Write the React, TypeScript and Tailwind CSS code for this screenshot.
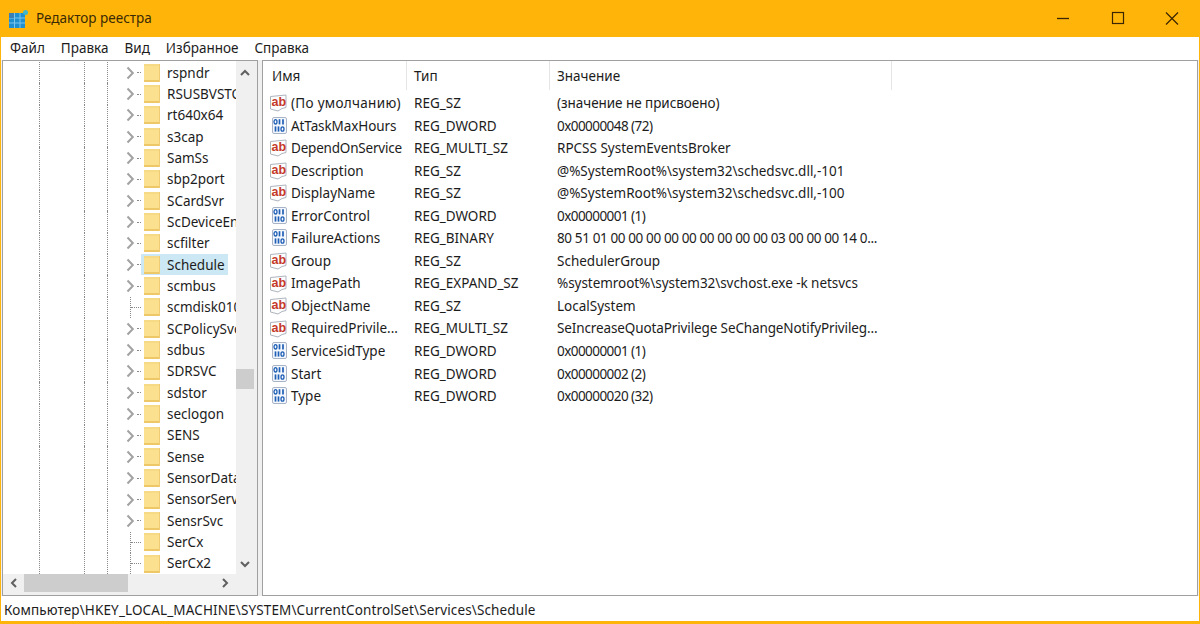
import React from "react";

const tree: [string, boolean][] = [
  ["rspndr", true], ["RSUSBVSTOR", true], ["rt640x64", true], ["s3cap", true], ["SamSs", true],
  ["sbp2port", true], ["SCardSvr", true], ["ScDeviceEnum", true], ["scfilter", true], ["Schedule", true],
  ["scmbus", true], ["scmdisk0101", false], ["SCPolicySvc", true], ["sdbus", true], ["SDRSVC", true],
  ["sdstor", true], ["seclogon", true], ["SENS", true], ["Sense", true], ["SensorDataService", true],
  ["SensorService", true], ["SensrSvc", true], ["SerCx", false], ["SerCx2", false],
];

type Row = { name: string; ab: boolean; type: string; value: string; nameCls?: string; valueCls?: string };
const HEX = "tracking-[-0.55px]";
const rows: Row[] = [
  { name: "(По умолчанию)", ab: true, type: "REG_SZ", value: "(значение не присвоено)", nameCls: "tracking-[0.3px]", valueCls: "tracking-[-0.05px]" },
  { name: "AtTaskMaxHours", ab: false, type: "REG_DWORD", value: "0x00000048 (72)", nameCls: "tracking-[-0.1px]", valueCls: HEX },
  { name: "DependOnService", ab: true, type: "REG_MULTI_SZ", value: "RPCSS SystemEventsBroker", nameCls: "tracking-[-0.2px]" },
  { name: "Description", ab: true, type: "REG_SZ", value: "@%SystemRoot%\\system32\\schedsvc.dll,-101" },
  { name: "DisplayName", ab: true, type: "REG_SZ", value: "@%SystemRoot%\\system32\\schedsvc.dll,-100" },
  { name: "ErrorControl", ab: false, type: "REG_DWORD", value: "0x00000001 (1)", valueCls: HEX },
  { name: "FailureActions", ab: false, type: "REG_BINARY", value: "80 51 01 00 00 00 00 00 00 00 00 00 03 00 00 00 14 0...", valueCls: "tracking-[-0.38px]" },
  { name: "Group", ab: true, type: "REG_SZ", value: "SchedulerGroup" },
  { name: "ImagePath", ab: true, type: "REG_EXPAND_SZ", value: "%systemroot%\\system32\\svchost.exe -k netsvcs", valueCls: "tracking-[-0.05px]" },
  { name: "ObjectName", ab: true, type: "REG_SZ", value: "LocalSystem" },
  { name: "RequiredPrivile...", ab: true, type: "REG_MULTI_SZ", value: "SeIncreaseQuotaPrivilege SeChangeNotifyPrivileg...", valueCls: "tracking-[-0.12px]" },
  { name: "ServiceSidType", ab: false, type: "REG_DWORD", value: "0x00000001 (1)", valueCls: HEX },
  { name: "Start", ab: false, type: "REG_DWORD", value: "0x00000002 (2)", valueCls: HEX },
  { name: "Type", ab: false, type: "REG_DWORD", value: "0x00000020 (32)", valueCls: HEX },
];

function AbIcon() {
  return (
    <svg width="19" height="18" viewBox="0 0 19 18" className="shrink-0">
      <path d="M1.5 2.5 L17 1 V13.5 L13 14.5 L9 17 L1.5 15 Z" fill="#fdfdfd" stroke="#aeb4be" strokeWidth="1" />
      <text x="2.5" y="12" fontFamily="'Liberation Sans', sans-serif" fontSize="12.5" fontWeight="700" fill="#c5392a">ab</text>
    </svg>
  );
}

function BinIcon() {
  const zero = (x: number, y: number) => <ellipse key={`z${x}${y}`} cx={x} cy={y} rx="1.5" ry="2.2" fill="none" stroke="#1f5fb5" strokeWidth="1.3" />;
  const one = (x: number, y: number) => <path key={`o${x}${y}`} d={`M${x} ${y - 2.6} V${y + 2.6}`} stroke="#1f5fb5" strokeWidth="1.7" />;
  return (
    <svg width="19" height="18" viewBox="0 0 19 18" className="shrink-0">
      <rect x="3.5" y="0.5" width="14" height="16" rx="1.5" fill="#f4f8fd" stroke="#a8b4c6" />
      {zero(6.5, 4.8)}{one(10.5, 4.8)}{one(14, 4.8)}
      {one(6.5, 12)}{one(9.5, 12)}{zero(13.5, 12)}
    </svg>
  );
}

function Folder() {
  return (
    <svg width="17" height="20" viewBox="0 0 17 20" className="shrink-0">
      <path d="M0 1 H16 V19 H0 Z" fill="#fbe08f" />
      <path d="M0 1 H16 V3 H0 Z" fill="#f7da85" />
      <path d="M0 17 H16 V19 H0 Z" fill="#eec767" />
      <path d="M15.5 1 V19" stroke="#f0cd75" />
    </svg>
  );
}

function Chevron() {
  return (
    <svg width="9" height="14" viewBox="0 0 9 14" className="shrink-0">
      <path d="M1.5 1.5 L6.8 7 L1.5 12.5" fill="none" stroke="#a2a2a2" strokeWidth="2" />
    </svg>
  );
}

function Guide({ w }: { w: string }) {
  return <div className={`${w} h-full shrink-0 border-l border-dotted border-[#8a8a8a]`} />;
}

function TreeRow({ name, expandable }: { name: string; expandable: boolean }) {
  const selected = name === "Schedule";
  return (
    <div className="flex h-[21.35px] items-center">
      <div className="w-[36px] shrink-0" />
      <Guide w="w-[45px]" />
      <Guide w="w-[23px]" />
      <Guide w="w-[19px]" />
      <div className="flex h-full w-[15px] shrink-0 items-center">
        {expandable ? (
          <>
            <Chevron />
            <div className="ml-[2px] h-0 w-[4px] border-t border-dotted border-[#8a8a8a]" />
          </>
        ) : (
          <>
            <div className="ml-[4px] h-full border-l border-dotted border-[#8a8a8a]" />
            <div className="h-0 w-[10px] border-t border-dotted border-[#8a8a8a]" />
          </>
        )}
      </div>
      <div className={`flex h-full items-center pl-[3px] ${selected ? "w-[87px] shrink-0 bg-[#cce8f4]" : ""}`}>
        <Folder />
        <span className="ml-[6px] whitespace-nowrap">{name}</span>
      </div>
    </div>
  );
}

function ValueRow({ v }: { v: Row }) {
  return (
    <div className="flex h-[22.54px] items-center">
      <div className="flex w-[144px] shrink-0 items-center pl-[6px]">
        {v.ab ? <AbIcon /> : <BinIcon />}
        <span className={`ml-[3px] whitespace-nowrap ${v.nameCls ?? ""}`}>{v.name}</span>
      </div>
      <div className="w-[143px] shrink-0 whitespace-nowrap pl-[7px]">{v.type}</div>
      <div className={`whitespace-nowrap pl-[7px] ${v.valueCls ?? ""}`}>{v.value}</div>
    </div>
  );
}

export default function App() {
  return (
    <div className="flex h-[624px] w-[1200px] flex-col overflow-hidden bg-[#ffb40a] text-[13.5px] text-[#1c1c1c] [font-family:'Noto_Sans',sans-serif]">
      <header className="flex h-[37px] shrink-0 items-center">
        <svg width="20" height="20" viewBox="0 0 20 20" className="ml-[9px] shrink-0">
          <rect x="0" y="4" width="16" height="15" fill="#1f8fd0" />
          <path d="M0 9 H16 M0 14 H16 M5.5 4 V19 M11 4 V19" stroke="#7cc4ea" strokeWidth="1" />
          <rect x="0" y="4" width="5" height="5" fill="#3a7fb5" />
          <circle cx="16.5" cy="3.5" r="2.5" fill="#3fb6c9" />
        </svg>
        <span className="ml-[7px] text-[#3a2a05]">Редактор реестра</span>
        <div className="ml-auto flex items-center text-[#3a2600]">
          <svg width="54" height="37" viewBox="0 0 54 37"><path d="M21 18.5 H33" stroke="currentColor" strokeWidth="1.3" /></svg>
          <svg width="54" height="37" viewBox="0 0 54 37" className="ml-[1px]"><rect x="21.5" y="12.5" width="11" height="11" fill="none" stroke="currentColor" strokeWidth="1.2" /></svg>
          <svg width="54" height="37" viewBox="0 0 54 37" className="mr-[1px]"><path d="M21 12.5 L33 24.5 M33 12.5 L21 24.5" stroke="currentColor" strokeWidth="1.2" /></svg>
        </div>
      </header>

      <div className="mx-[1px] mb-[3px] flex min-h-0 flex-1 flex-col bg-white">
        <nav className="flex h-[23px] shrink-0 items-center gap-[16px] pl-[9px]">
          <span>Файл</span>
          <span>Правка</span>
          <span>Вид</span>
          <span>Избранное</span>
          <span>Справка</span>
        </nav>

        <div className="flex h-[536px] shrink-0 gap-[4px] bg-[#f0f0f0] px-[1px]">
          <div className="flex w-[256px] shrink-0 flex-col border border-[#a0a0a0] bg-white">
            <div className="flex min-h-0 flex-1">
              <div className="min-w-0 flex-1 overflow-hidden pt-[1px]">
                {tree.map(([n, e]) => <TreeRow key={n} name={n} expandable={e} />)}
              </div>
              <div className="flex w-[21px] shrink-0 flex-col items-start bg-[#f0f0f0]">
                <div className="flex h-[20px] w-[18px] items-center justify-center pt-[2px]">
                  <svg width="10" height="7" viewBox="0 0 10 7"><path d="M1 6 L5 2 L9 6" fill="none" stroke="#606060" strokeWidth="2" /></svg>
                </div>
                <div className="h-[288px] shrink-0" />
                <div className="h-[20px] w-[18px] bg-[#cdcdcd]" />
                <div className="flex-1" />
                <div className="flex h-[20px] w-[18px] items-center justify-center">
                  <svg width="10" height="7" viewBox="0 0 10 7"><path d="M1 1 L5 5 L9 1" fill="none" stroke="#606060" strokeWidth="2" /></svg>
                </div>
              </div>
            </div>
            <div className="flex h-[21px] shrink-0 items-start bg-[#f0f0f0] pb-[3px]">
              <div className="flex h-full w-[21px] items-center justify-center">
                <svg width="7" height="10" viewBox="0 0 7 10"><path d="M6 1 L2 5 L6 9" fill="none" stroke="#606060" strokeWidth="2" /></svg>
              </div>
              <div className="h-full w-[104px] bg-[#cdcdcd]" />
              <div className="flex h-full flex-1 items-center justify-end pr-[28px]">
                <svg width="7" height="10" viewBox="0 0 7 10"><path d="M1 1 L5 5 L1 9" fill="none" stroke="#606060" strokeWidth="2" /></svg>
              </div>
            </div>
          </div>

          <div className="min-w-0 flex-1 border border-[#a0a0a0] bg-white">
            <div className="flex h-[29px] items-center">
              <div className="h-full w-[144px] border-r border-[#e5e5e5] pl-[9px] pt-[5px]">Имя</div>
              <div className="h-full w-[143px] border-r border-[#e5e5e5] pl-[7px] pt-[5px]">Тип</div>
              <div className="h-full w-[342px] border-r border-[#e5e5e5] pl-[7px] pt-[5px]">Значение</div>
            </div>
            <div className="pt-[2px]">
              {rows.map((v) => <ValueRow key={v.name} v={v} />)}
            </div>
          </div>
        </div>

        <footer className="flex min-h-0 flex-1 items-center pl-[3px] pt-[4px] tracking-[0.13px]">
          Компьютер\HKEY_LOCAL_MACHINE\SYSTEM\CurrentControlSet\Services\Schedule
        </footer>
      </div>
    </div>
  );
}
